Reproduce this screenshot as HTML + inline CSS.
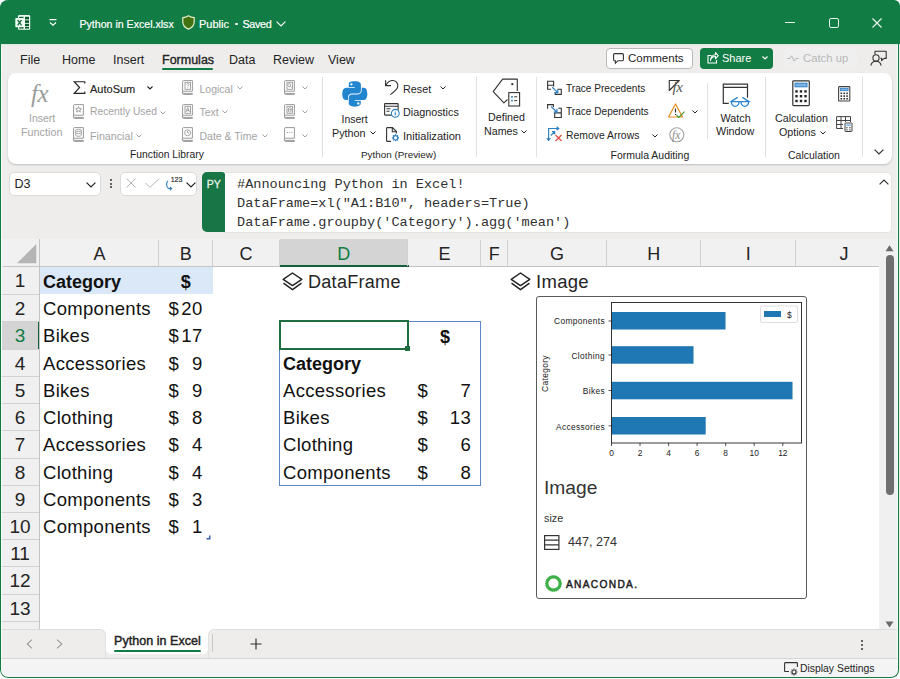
<!DOCTYPE html>
<html><head><meta charset="utf-8">
<style>
*{box-sizing:border-box;margin:0;padding:0}
html,body{width:900px;height:679px;overflow:hidden;background:#fff;font-family:"Liberation Sans",sans-serif;color:#242424}
.a{position:absolute}
svg{position:absolute;overflow:visible}
#win{position:absolute;left:0;top:0;width:900px;height:678px;border-radius:8px 6px 8px 8px;overflow:hidden;background:#eeedec}
#frame{position:absolute;left:0;top:0;width:899px;height:678px;border-radius:8px;border:1px solid #117c43;border-top:none;pointer-events:none}
#title{position:absolute;left:0;top:0;width:900px;height:44px;background:#117c43;color:#fff}
.tt{position:absolute;font-size:11px;color:#fff;white-space:nowrap;line-height:1;-webkit-text-stroke:0.2px #fff}
.tab{position:absolute;font-size:12.5px;color:#242424;line-height:1;white-space:nowrap}
#ribbon{position:absolute;left:8px;top:73px;width:884px;height:91px;background:#fff;border-radius:8px;box-shadow:0 1px 2px rgba(0,0,0,.2)}
.rl{position:absolute;font-size:10.5px;color:#242424;white-space:nowrap;line-height:1}
.dis{color:#a3a3a3}
.grp{position:absolute;top:77px;font-size:10.5px;color:#242424;white-space:nowrap;line-height:1}
.sep{position:absolute;top:4px;width:1px;height:80px;background:#e1e1e1}
.chev{position:absolute}
#grid{position:absolute;left:0;top:239px;width:881px;height:390px;background:#fff;overflow:hidden}
.ch{position:absolute;top:0;height:27px;border-right:1px solid #d9d9d9;border-bottom:1px solid #bdbdbd;background:#f3f3f3;font-size:17px;text-align:center;line-height:29px;color:#242424}
.rhx{position:absolute;left:0;width:39px;height:27.3px;border-bottom:1px solid #d9d9d9;border-right:1px solid #bdbdbd;background:#f3f3f3;font-size:19.5px;text-align:center;color:#242424;line-height:29px}
.c{position:absolute;font-size:18.5px;color:#111;white-space:nowrap;line-height:1;letter-spacing:0.3px}
.cb{letter-spacing:0}
.cb{font-weight:bold;font-size:18px}
</style></head><body>
<div id="win">
  <div id="title">
    <svg style="left:15px;top:15px" width="16" height="15" viewBox="0 0 16 15">
      <rect x="3" y="0" width="12.2" height="14.8" rx="1.2" fill="#e9fbef"/>
      <g fill="#0d5a2e"><rect x="10" y="1.8" width="4" height="2.6"/><rect x="10" y="5.3" width="4" height="2.6"/><rect x="10" y="8.8" width="4" height="2.4"/><rect x="10" y="12" width="4" height="1.6"/>
      <rect x="4.2" y="1.8" width="4.3" height="1.6"/><rect x="4.2" y="12" width="4.3" height="1.6"/></g>
      <rect x="0.3" y="3" width="8.5" height="9.3" rx="0.8" fill="#f2fff6"/>
      <path d="M2.6 5L6.5 10.3M6.5 5L2.6 10.3" stroke="#1b6b3e" stroke-width="1.3"/>
    </svg>
    <svg style="left:49px;top:19px" width="8" height="8" viewBox="0 0 8 8">
      <path d="M0.5 0.7H7.5M1 3.5L4 6.3L7 3.5" fill="none" stroke="#fff" stroke-width="1.2"/>
    </svg>
    <div class="tt" style="left:79.5px;top:19px;font-size:10.6px">Python in Excel.xlsx</div>
    <svg style="left:182px;top:15px" width="13" height="15" viewBox="0 0 13 15">
      <path d="M6.5 0.8C4.6 2 2.6 2.6 0.8 2.7V7C0.8 10.6 3.2 12.8 6.5 14.2C9.8 12.8 12.2 10.6 12.2 7V2.7C10.4 2.6 8.4 2 6.5 0.8Z" fill="#41720f" stroke="#dfeac4" stroke-width="1.25"/>
    </svg>
    <div class="tt" style="left:199px;top:19px;font-size:11px">Public</div>
    <div class="a" style="left:235px;top:22.8px;width:2.6px;height:2.6px;border-radius:50%;background:#fff"></div>
    <div class="tt" style="left:242.5px;top:19px;font-size:10.8px;letter-spacing:-0.35px">Saved</div>
    <svg style="left:275.5px;top:20.5px" width="10" height="6" viewBox="0 0 10 6">
      <path d="M0.6 0.6L5 5L9.4 0.6" fill="none" stroke="#fff" stroke-width="1.2"/>
    </svg>
    <div class="a" style="left:785px;top:21.5px;width:10px;height:1.2px;background:#e8f4ec"></div>
    <div class="a" style="left:828.5px;top:17.5px;width:10px;height:10px;border:1.2px solid #e8f4ec;border-radius:2px"></div>
    <svg style="left:872px;top:17.5px" width="10" height="10" viewBox="0 0 10 10">
      <path d="M0.5 0.5L9.5 9.5M9.5 0.5L0.5 9.5" stroke="#e8f4ec" stroke-width="1.2"/>
    </svg>
  </div>
  <!-- right buttons -->
  <div class="a" style="left:605.5px;top:47.5px;width:87px;height:21px;border:1px solid #b9b9b9;border-radius:4px;background:#fff"></div>
  <svg style="left:613px;top:53px" width="11" height="11" viewBox="0 0 11 11">
    <path d="M1.5 0.6H9.5A0.9 0.9 0 0 1 10.4 1.5V6.8A0.9 0.9 0 0 1 9.5 7.7H5L2.4 10.2V7.7H1.5A0.9 0.9 0 0 1 0.6 6.8V1.5A0.9 0.9 0 0 1 1.5 0.6Z" fill="none" stroke="#333" stroke-width="1.1"/>
  </svg>
  <div class="rl" style="left:628px;top:52.5px;font-size:11.5px;color:#242424">Comments</div>
  <div class="a" style="left:700px;top:47.5px;width:72.5px;height:21px;border-radius:4px;background:#117c43"></div>
  <svg style="left:707px;top:52px" width="12" height="12" viewBox="0 0 12 12">
    <path d="M4.5 3.5H1V11H9.5V8" fill="none" stroke="#fff" stroke-width="1.1"/>
    <path d="M3.5 8.5C4 5.5 6 4.5 8.5 4.5V6.8L11.2 3.6L8.5 0.6V2.8C5.5 2.8 3.5 5 3.5 8.5Z" fill="none" stroke="#fff" stroke-width="1.1" stroke-linejoin="round"/>
  </svg>
  <div class="rl" style="left:722px;top:53px;font-size:11px;color:#fff">Share</div>
  <svg style="left:762px;top:56px" width="6" height="4" viewBox="0 0 6 4">
    <path d="M0.5 0.5L3 3L5.5 0.5" fill="none" stroke="#fff" stroke-width="1.2"/>
  </svg>
  <div class="a" style="left:784px;top:48px;width:72.5px;height:20px;border-radius:4px;background:#efefef"></div>
  <svg style="left:787px;top:55px" width="12" height="7" viewBox="0 0 12 7">
    <path d="M0.3 3.5H2.8L4.6 0.8L7.2 6.2L8.9 3.5H11.6" fill="none" stroke="#b5b5b5" stroke-width="1"/>
  </svg>
  <div class="rl" style="left:803px;top:52.5px;font-size:11.3px;color:#b8b8b8">Catch up</div>
  <svg style="left:869px;top:49px" width="19" height="19" viewBox="869 49 19 19">
    <path d="M875 54.2V51.3H886.2V58.4H884.2L881.6 60.6L881.8 58.4H880.5" fill="none" stroke="#333" stroke-width="1.1" stroke-linejoin="round"/>
    <circle cx="876" cy="57.9" r="3.1" fill="#eeedec" stroke="#333" stroke-width="1.1"/>
    <path d="M870.9 65.6C871.3 62.8 873.4 61.3 876 61.3C878.6 61.3 880.7 62.8 881.1 65.6" fill="none" stroke="#333" stroke-width="1.1"/>
  </svg>
  <div class="a" style="left:0;top:44px;width:900px;height:1px;background:#d6ebdc"></div>
  <div class="tab" style="left:20px;top:54px">File</div>
  <div class="tab" style="left:62px;top:54px">Home</div>
  <div class="tab" style="left:113px;top:54px">Insert</div>
  <div class="tab" style="left:162px;top:54px;-webkit-text-stroke:0.35px #242424">Formulas</div>
  <div class="a" style="left:162px;top:68px;width:51px;height:2px;background:#117c43;border-radius:1px"></div>
  <div class="tab" style="left:229px;top:54px">Data</div>
  <div class="tab" style="left:273px;top:54px">Review</div>
  <div class="tab" style="left:328px;top:54px">View</div>

  <div id="ribbon"></div>
  <!-- ===== RIBBON CONTENT ===== -->
  <!-- Function Library -->
  <div class="a" style="left:31px;top:81px;font-family:'Liberation Serif',serif;font-style:italic;font-size:25px;color:#9c9c9c;line-height:1;letter-spacing:-0.5px">fx</div>
  <div class="rl dis" style="left:29px;top:113px">Insert</div>
  <div class="rl dis" style="left:21px;top:127px;font-size:10.8px">Function</div>
  <svg style="left:73px;top:81px" width="13" height="13" viewBox="0 0 13 13">
    <path d="M11.8 2.6V0.7H1.2L6.6 6.5L1.2 12.3H11.8V10.4" fill="none" stroke="#242424" stroke-width="1.15" stroke-linejoin="miter"/>
  </svg>
  <div class="rl" style="left:90px;top:83.5px;font-size:11px;-webkit-text-stroke:0.15px #242424">AutoSum</div>
  <svg class="chev" style="left:147px;top:86px" width="6" height="4" viewBox="0 0 6 4"><path d="M0.5 0.5L3 3L5.5 0.5" fill="none" stroke="#242424" stroke-width="1.1"/></svg>
  <div class="rl dis" style="left:90px;top:106.6px;font-size:10.3px">Recently Used</div>
  <svg class="chev" style="left:160px;top:111px" width="6" height="4" viewBox="0 0 6 4"><path d="M0.5 0.5L3 3L5.5 0.5" fill="none" stroke="#a3a3a3" stroke-width="1"/></svg>
  <div class="rl dis" style="left:90px;top:131.3px;font-size:10.7px">Financial</div>
  <svg class="chev" style="left:136px;top:134px" width="6" height="4" viewBox="0 0 6 4"><path d="M0.5 0.5L3 3L5.5 0.5" fill="none" stroke="#a3a3a3" stroke-width="1"/></svg>
  <!-- book icons col1 -->
  <svg style="left:73px;top:104px" width="12" height="15" viewBox="0 0 12 15">
    <path d="M1.5 0.6H10.4V11.2H1.5A1 1 0 0 0 1.5 13.4H10.4V14.4H1.5A0.9 0.9 0 0 1 0.6 13.5V1.5A0.9 0.9 0 0 1 1.5 0.6Z" fill="none" stroke="#9a9a9a" stroke-width="1"/>
    <path d="M5.5 2.6L6.3 4.6L8.4 4.7L6.8 6L7.3 8.1L5.5 7L3.7 8.1L4.2 6L2.6 4.7L4.7 4.6Z" fill="none" stroke="#9a9a9a" stroke-width="0.9"/>
  </svg>
  <svg style="left:73px;top:127px" width="12" height="15" viewBox="0 0 12 15">
    <path d="M1.5 0.6H10.4V11.2H1.5A1 1 0 0 0 1.5 13.4H10.4V14.4H1.5A0.9 0.9 0 0 1 0.6 13.5V1.5A0.9 0.9 0 0 1 1.5 0.6Z" fill="none" stroke="#9a9a9a" stroke-width="1"/>
    <ellipse cx="5.5" cy="3.4" rx="2.8" ry="1.1" fill="none" stroke="#9a9a9a" stroke-width="0.9"/>
    <path d="M2.7 3.4V8.3C2.7 9.6 8.3 9.6 8.3 8.3V3.4M2.7 5.8C2.7 7 8.3 7 8.3 5.8" fill="none" stroke="#9a9a9a" stroke-width="0.9"/>
  </svg>
  <!-- col2 -->
  <svg style="left:182px;top:80px" width="12" height="15" viewBox="0 0 12 15">
    <path d="M1.5 0.6H10.4V11.2H1.5A1 1 0 0 0 1.5 13.4H10.4V14.4H1.5A0.9 0.9 0 0 1 0.6 13.5V1.5A0.9 0.9 0 0 1 1.5 0.6Z" fill="none" stroke="#9a9a9a" stroke-width="1"/>
    <rect x="3" y="2.3" width="5.5" height="7" fill="none" stroke="#9a9a9a" stroke-width="0.9"/>
    <path d="M4.5 4.4C4.5 3.2 7 3.2 7 4.4C7 5.3 5.8 5.4 5.8 6.6M5.8 7.4V8.1" fill="none" stroke="#9a9a9a" stroke-width="0.9"/>
  </svg>
  <div class="rl dis" style="left:199.5px;top:83.5px;font-size:10.5px">Logical</div>
  <svg class="chev" style="left:237px;top:86px" width="6" height="4" viewBox="0 0 6 4"><path d="M0.5 0.5L3 3L5.5 0.5" fill="none" stroke="#a3a3a3" stroke-width="1"/></svg>
  <svg style="left:182px;top:104px" width="12" height="15" viewBox="0 0 12 15">
    <path d="M1.5 0.6H10.4V11.2H1.5A1 1 0 0 0 1.5 13.4H10.4V14.4H1.5A0.9 0.9 0 0 1 0.6 13.5V1.5A0.9 0.9 0 0 1 1.5 0.6Z" fill="none" stroke="#9a9a9a" stroke-width="1"/>
    <rect x="3" y="2.3" width="5.5" height="7" fill="none" stroke="#9a9a9a" stroke-width="0.9"/>
    <path d="M4 8L5.75 3.5L7.5 8M4.6 6.5H6.9" fill="none" stroke="#9a9a9a" stroke-width="0.9"/>
  </svg>
  <div class="rl dis" style="left:199.5px;top:106.6px;font-size:10.5px">Text</div>
  <svg class="chev" style="left:222px;top:110px" width="6" height="4" viewBox="0 0 6 4"><path d="M0.5 0.5L3 3L5.5 0.5" fill="none" stroke="#a3a3a3" stroke-width="1"/></svg>
  <svg style="left:182px;top:127px" width="12" height="15" viewBox="0 0 12 15">
    <path d="M1.5 0.6H10.4V11.2H1.5A1 1 0 0 0 1.5 13.4H10.4V14.4H1.5A0.9 0.9 0 0 1 0.6 13.5V1.5A0.9 0.9 0 0 1 1.5 0.6Z" fill="none" stroke="#9a9a9a" stroke-width="1"/>
    <circle cx="5.6" cy="5.8" r="3" fill="none" stroke="#9a9a9a" stroke-width="0.9"/>
    <path d="M5.6 4V5.9H7.2" fill="none" stroke="#9a9a9a" stroke-width="0.9"/>
  </svg>
  <div class="rl dis" style="left:199.5px;top:131.3px;font-size:10.5px">Date &amp; Time</div>
  <svg class="chev" style="left:262px;top:134px" width="6" height="4" viewBox="0 0 6 4"><path d="M0.5 0.5L3 3L5.5 0.5" fill="none" stroke="#a3a3a3" stroke-width="1"/></svg>
  <!-- col3 -->
  <svg style="left:284px;top:80px" width="12" height="15" viewBox="0 0 12 15">
    <path d="M1.5 0.6H10.4V11.2H1.5A1 1 0 0 0 1.5 13.4H10.4V14.4H1.5A0.9 0.9 0 0 1 0.6 13.5V1.5A0.9 0.9 0 0 1 1.5 0.6Z" fill="none" stroke="#9a9a9a" stroke-width="1"/>
    <rect x="3" y="2.3" width="5.5" height="7" fill="none" stroke="#9a9a9a" stroke-width="0.9"/>
    <circle cx="5.2" cy="5.2" r="1.5" fill="none" stroke="#9a9a9a" stroke-width="0.9"/>
    <path d="M6.3 6.3L7.6 7.6" stroke="#9a9a9a" stroke-width="0.9"/>
  </svg>
  <svg class="chev" style="left:302px;top:86px" width="6" height="4" viewBox="0 0 6 4"><path d="M0.5 0.5L3 3L5.5 0.5" fill="none" stroke="#a3a3a3" stroke-width="1"/></svg>
  <svg style="left:284px;top:104px" width="12" height="15" viewBox="0 0 12 15">
    <path d="M1.5 0.6H10.4V11.2H1.5A1 1 0 0 0 1.5 13.4H10.4V14.4H1.5A0.9 0.9 0 0 1 0.6 13.5V1.5A0.9 0.9 0 0 1 1.5 0.6Z" fill="none" stroke="#9a9a9a" stroke-width="1"/>
    <rect x="3" y="2.3" width="5.5" height="7" fill="none" stroke="#9a9a9a" stroke-width="0.9"/>
    <ellipse cx="5.75" cy="5.8" rx="1.5" ry="2.4" fill="none" stroke="#9a9a9a" stroke-width="0.9"/>
    <path d="M4.25 5.8H7.25" stroke="#9a9a9a" stroke-width="0.9"/>
  </svg>
  <svg class="chev" style="left:302px;top:110px" width="6" height="4" viewBox="0 0 6 4"><path d="M0.5 0.5L3 3L5.5 0.5" fill="none" stroke="#a3a3a3" stroke-width="1"/></svg>
  <svg style="left:284px;top:127px" width="12" height="15" viewBox="0 0 12 15">
    <path d="M1.5 0.6H10.4V11.2H1.5A1 1 0 0 0 1.5 13.4H10.4V14.4H1.5A0.9 0.9 0 0 1 0.6 13.5V1.5A0.9 0.9 0 0 1 1.5 0.6Z" fill="none" stroke="#9a9a9a" stroke-width="1"/>
    <path d="M3 5.5H4M5.2 5.5H6.2M7.4 5.5H8.4" stroke="#9a9a9a" stroke-width="1"/>
  </svg>
  <svg class="chev" style="left:302px;top:134px" width="6" height="4" viewBox="0 0 6 4"><path d="M0.5 0.5L3 3L5.5 0.5" fill="none" stroke="#a3a3a3" stroke-width="1"/></svg>
  <div class="grp" style="left:130px;top:150px;font-size:10.3px">Function Library</div>
  <div class="a" style="left:322px;top:77px;width:1px;height:80px;background:#e1e1e1"></div>

  <!-- Python group -->
  <svg style="left:342px;top:80.5px" width="25.5" height="25.5" viewBox="0 0 110 110">
    <path fill="#2286cf" d="M54.9 1.2C50.4 1.2 46.1 1.6 42.3 2.3C31.1 4.3 29.1 8.4 29.1 16V26H55.4V29.4H29.1H19.2C11.6 29.4 4.9 34 2.9 42.6C0.5 52.5 0.4 58.7 2.9 69C4.8 76.7 9.1 82.2 16.7 82.2H25.7V70.2C25.7 61.6 33.2 53.9 42.1 53.9H68.4C75.7 53.9 81.5 47.9 81.5 40.6V16C81.5 8.9 75.5 3.6 68.4 2.4C63.9 1.6 59.2 1.2 54.9 1.2ZM40.6 9.4C43.4 9.4 45.6 11.7 45.6 14.5C45.6 17.2 43.4 19.5 40.6 19.5C37.9 19.5 35.6 17.2 35.6 14.5C35.6 11.7 37.9 9.4 40.6 9.4Z"/>
    <path fill="#2286cf" d="M85 29.4V41.1C85 50.1 77.3 57.7 68.4 57.7H42.1C34.9 57.7 28.9 63.9 28.9 71.1V95.7C28.9 102.7 35 106.8 41.9 108.8C50.1 111.2 58 111.6 68.1 108.8C74.6 106.9 81.1 103.1 81.1 95.7V85.6H55V82.2H81.1H94.2C101.9 82.2 104.7 76.9 107.4 69C110.1 60.9 110 53.2 107.4 42.6C105.5 35 101.9 29.4 94.2 29.4ZM70.3 91.9C73 91.9 75.3 94.2 75.3 97C75.3 99.8 73 102.1 70.3 102.1C67.5 102.1 65.3 99.8 65.3 97C65.3 94.2 67.5 91.9 70.3 91.9Z"/>
  </svg>
  <div class="rl" style="left:341.5px;top:113.8px">Insert</div>
  <div class="rl" style="left:332px;top:127.6px;font-size:10.8px">Python</div>
  <svg class="chev" style="left:370px;top:131px" width="6" height="4" viewBox="0 0 6 4"><path d="M0.5 0.5L3 3L5.5 0.5" fill="none" stroke="#242424" stroke-width="1"/></svg>
  <svg style="left:384px;top:78px" width="16" height="18" viewBox="384 78 16 18">
    <path d="M385.6 80.2V85.6H391" fill="none" stroke="#333" stroke-width="1.1"/>
    <path d="M386 85.2C387.6 82 390.3 80.3 393.2 80.5C396.2 80.8 398.2 83.4 397.8 86.4C397.5 88.6 394.8 91.5 390.3 94.6" fill="none" stroke="#333" stroke-width="1.1"/>
  </svg>
  <div class="rl" style="left:403px;top:83.5px;font-size:10.8px">Reset</div>
  <svg class="chev" style="left:440px;top:86px" width="6" height="4" viewBox="0 0 6 4"><path d="M0.5 0.5L3 3L5.5 0.5" fill="none" stroke="#242424" stroke-width="1"/></svg>
  <svg style="left:384px;top:103px" width="16" height="15" viewBox="0 0 16 15">
    <rect x="0.6" y="0.6" width="13.5" height="11.5" rx="0.5" fill="none" stroke="#333" stroke-width="1.1"/>
    <path d="M0.6 3.2H14.1M2.5 5.8H6.5M2.5 8.3H5.5" stroke="#333" stroke-width="1.1"/>
    <circle cx="11.3" cy="10.3" r="3.9" fill="#fff" stroke="#2e7fc3" stroke-width="1.1"/>
    <path d="M11.3 9.2V12.3M11.3 7.8V8.3" stroke="#2e7fc3" stroke-width="1.2"/>
  </svg>
  <div class="rl" style="left:403px;top:106.6px;font-size:10.8px">Diagnostics</div>
  <svg style="left:386px;top:127px" width="14" height="15" viewBox="0 0 14 15">
    <path d="M5 14.4H1.2A0.6 0.6 0 0 1 0.6 13.8V1.2A0.6 0.6 0 0 1 1.2 0.6H6.5L10.4 4.5V6.5" fill="none" stroke="#333" stroke-width="1.1"/>
    <path d="M6.3 0.6V4.7H10.4" fill="none" stroke="#333" stroke-width="1.1"/>
    <circle cx="9.5" cy="10.8" r="2.2" fill="none" stroke="#2e7fc3" stroke-width="1.2"/>
    <path d="M9.5 7.3V8.4M9.5 13.2V14.3M6 10.8H7.1M11.9 10.8H13M7 8.3L7.8 9.1M11.2 12.5L12 13.3M12 8.3L11.2 9.1M7.8 12.5L7 13.3" stroke="#2e7fc3" stroke-width="1.2"/>
  </svg>
  <div class="rl" style="left:403px;top:131.3px;font-size:11.1px">Initialization</div>
  <div class="grp" style="left:361px;top:150px;font-size:9.9px">Python (Preview)</div>
  <div class="a" style="left:476px;top:77px;width:1px;height:80px;background:#e1e1e1"></div>

  <!-- Defined names -->
  <svg style="left:492px;top:78px" width="29" height="29" viewBox="0 0 29 29">
    <path d="M15.5 21.5L11.9 24.8L1.2 13.6L10.6 1.1H25.3V13" fill="none" stroke="#333" stroke-width="1.1" stroke-linejoin="round"/>
    <circle cx="20.3" cy="6.2" r="1.15" fill="#333"/>
    <rect x="16.8" y="14.6" width="10.8" height="13.4" fill="#fff" stroke="#333" stroke-width="1.1"/>
    <path d="M19.2 18.8H20.8M19.2 22.6H20.8" stroke="#2e7fc3" stroke-width="1.8"/>
    <path d="M22.2 18.8H25.2M22.2 22.6H25.2" stroke="#333" stroke-width="1"/>
  </svg>
  <div class="rl" style="left:488px;top:111.5px;font-size:10.7px">Defined</div>
  <div class="rl" style="left:484px;top:125.8px;font-size:10.7px">Names</div>
  <svg class="chev" style="left:521px;top:130px" width="6" height="4" viewBox="0 0 6 4"><path d="M0.5 0.5L3 3L5.5 0.5" fill="none" stroke="#242424" stroke-width="1"/></svg>
  <div class="a" style="left:536px;top:77px;width:1px;height:80px;background:#e1e1e1"></div>

  <!-- Formula Auditing -->
  <svg style="left:546px;top:79px" width="17" height="17" viewBox="546 79 17 17">
    <path d="M551 89.2H547.6V81.2H553.6V86.5M547.6 85.2H553.6" fill="none" stroke="#333" stroke-width="1.1"/>
    <path d="M557.5 89.2H561.3V94.4H555.2V92.6" fill="none" stroke="#333" stroke-width="1.1"/>
    <path d="M552.2 87.3L557.6 92.4M557.8 89.2V92.6H554.4" fill="none" stroke="#2e7fc3" stroke-width="1.2"/>
  </svg>
  <div class="rl" style="left:566px;top:83.5px;font-size:10.1px">Trace Precedents</div>
  <svg style="left:546px;top:103px" width="17" height="17" viewBox="546 103 17 17">
    <path d="M547.6 108.8V104.6H553.4V107" fill="none" stroke="#333" stroke-width="1.1"/>
    <path d="M558.3 108.3H561.3V117.5H554.7V112.8M554.7 112.9H561.3" fill="none" stroke="#333" stroke-width="1.1"/>
    <path d="M551.2 106.5L556.8 112M557 108.8V112.2H553.6" fill="none" stroke="#2e7fc3" stroke-width="1.2"/>
  </svg>
  <div class="rl" style="left:566px;top:106.6px;font-size:10.1px">Trace Dependents</div>
  <svg style="left:545px;top:126px" width="18" height="17" viewBox="545 126 18 17">
    <path d="M548.6 140V128.5H558.5M546.8 138.2L548.6 140.3L550.4 138.2M556.6 126.8L558.8 128.5L556.6 130.3M550.8 135.5L554.5 131.8M552 131.6H554.7V134.3" fill="none" stroke="#2e7fc3" stroke-width="1.15"/>
    <path d="M555.5 135L561.5 141M561.5 135L555.5 141" stroke="#e04848" stroke-width="1.2"/>
  </svg>
  <div class="rl" style="left:566px;top:131.3px;font-size:10.4px">Remove Arrows</div>
  <svg class="chev" style="left:652px;top:134px" width="6" height="4" viewBox="0 0 6 4"><path d="M0.5 0.5L3 3L5.5 0.5" fill="none" stroke="#242424" stroke-width="1"/></svg>
  <svg style="left:668px;top:79px" width="17" height="17" viewBox="0 0 17 17">
    <path d="M1.3 1.5V11.5L11.3 1.5Z" fill="none" stroke="#333" stroke-width="1.1" stroke-linejoin="round"/>
  </svg>
  <div class="a" style="left:672.5px;top:80px;font-family:'Liberation Serif',serif;font-style:italic;font-size:15px;color:#555;line-height:1;letter-spacing:-0.3px">fx</div>
  <svg style="left:668px;top:103px" width="18" height="16" viewBox="0 0 18 16">
    <path d="M7.5 1L14.5 14H0.6Z" fill="none" stroke="#e8891a" stroke-width="1.2" stroke-linejoin="round"/>
    <path d="M7.5 5.5V9.5M7.5 11V12" stroke="#333" stroke-width="1.2"/>
    <path d="M8.5 12L10.8 14.3L16.5 8.6" fill="none" stroke="#3a9a3a" stroke-width="1.2"/>
  </svg>
  <svg class="chev" style="left:692px;top:110px" width="6" height="4" viewBox="0 0 6 4"><path d="M0.5 0.5L3 3L5.5 0.5" fill="none" stroke="#242424" stroke-width="1"/></svg>
  <svg style="left:669px;top:127px" width="16" height="16" viewBox="0 0 16 16">
    <circle cx="7.8" cy="7.8" r="7" fill="none" stroke="#a3a3a3" stroke-width="1.1"/>
  </svg>
  <div class="a" style="left:672px;top:129.5px;font-family:'Liberation Serif',serif;font-style:italic;font-size:11.5px;color:#8e8e8e;line-height:1">fx</div>
  <div class="grp" style="left:610.5px;top:150px;font-size:10.5px">Formula Auditing</div>
  <div class="a" style="left:707px;top:83px;width:1px;height:56px;background:#e1e1e1"></div>

  <!-- Watch window -->
  <svg style="left:720px;top:82px" width="32" height="28" viewBox="720 82 32 28">
    <path d="M728.8 103.3H723.3V84.1H747.5V97.7M723.3 87.4H747.5" fill="none" stroke="#333" stroke-width="1.2"/>
    <path d="M730.6 101.7H749.6M731.4 101.8C731.2 107.8 739.2 107.8 739 101.8M741 101.8C740.8 107.8 748.8 107.8 748.6 101.8M731.3 101.4L737.2 97.6M748.7 101.4L742.8 97.6" fill="none" stroke="#2e86cf" stroke-width="1.3" stroke-linecap="round"/>
  </svg>
  <div class="rl" style="left:720.5px;top:113px;font-size:10.8px">Watch</div>
  <div class="rl" style="left:716px;top:126.3px;font-size:10.8px">Window</div>
  <div class="a" style="left:765px;top:77px;width:1px;height:80px;background:#e1e1e1"></div>

  <!-- Calculation -->
  <svg style="left:792px;top:80px" width="19" height="27" viewBox="0 0 19 27">
    <rect x="0.8" y="0.8" width="16.5" height="24.8" rx="0.8" fill="#fff" stroke="#333" stroke-width="1.2"/>
    <rect x="3" y="3.2" width="12" height="3.6" fill="#7db3e8" stroke="#2e7fc3" stroke-width="1"/>
    <g fill="#222"><rect x="3.3" y="10.2" width="2.4" height="2.4"/><rect x="7.8" y="10.2" width="2.4" height="2.4"/><rect x="12.3" y="10.2" width="2.4" height="2.4"/>
    <rect x="3.3" y="15" width="2.4" height="2.4"/><rect x="7.8" y="15" width="2.4" height="2.4"/><rect x="12.3" y="15" width="2.4" height="2.4"/>
    <rect x="3.3" y="19.8" width="2.4" height="2.4"/><rect x="7.8" y="19.8" width="2.4" height="2.4"/><rect x="12.3" y="19.8" width="2.4" height="2.4"/></g>
  </svg>
  <div class="rl" style="left:775px;top:112.9px;font-size:10.7px">Calculation</div>
  <div class="rl" style="left:779px;top:126.9px;font-size:10.7px">Options</div>
  <svg class="chev" style="left:820px;top:131px" width="6" height="4" viewBox="0 0 6 4"><path d="M0.5 0.5L3 3L5.5 0.5" fill="none" stroke="#242424" stroke-width="1"/></svg>
  <svg style="left:838px;top:86px" width="13" height="16" viewBox="0 0 13 16">
    <rect x="0.6" y="0.6" width="11.2" height="14.4" rx="0.6" fill="#fff" stroke="#444" stroke-width="1.1"/>
    <rect x="2.3" y="2.3" width="7.8" height="2.4" fill="#7db3e8" stroke="#2e7fc3" stroke-width="0.8"/>
    <g fill="#333"><rect x="2.5" y="6.5" width="1.6" height="1.6"/><rect x="5.4" y="6.5" width="1.6" height="1.6"/><rect x="8.3" y="6.5" width="1.6" height="1.6"/>
    <rect x="2.5" y="9.3" width="1.6" height="1.6"/><rect x="5.4" y="9.3" width="1.6" height="1.6"/><rect x="8.3" y="9.3" width="1.6" height="1.6"/>
    <rect x="2.5" y="12" width="1.6" height="1.6"/><rect x="5.4" y="12" width="1.6" height="1.6"/><rect x="8.3" y="12" width="1.6" height="1.6"/></g>
  </svg>
  <svg style="left:836px;top:116px" width="17" height="16" viewBox="0 0 17 16">
    <path d="M0.6 0.6H14.5V6M0.6 0.6V12.5H7M0.6 4.5H14.5M0.6 8.5H7M5 0.6V12.5M9.5 0.6V6" fill="none" stroke="#444" stroke-width="1"/>
    <rect x="9" y="7" width="7" height="8.5" rx="0.5" fill="#fff" stroke="#444" stroke-width="1"/>
    <rect x="10.3" y="8.4" width="4.4" height="1.6" fill="#7db3e8"/>
    <g fill="#555"><rect x="10.3" y="11" width="1.3" height="1.3"/><rect x="13.3" y="11" width="1.3" height="1.3"/><rect x="10.3" y="13.2" width="1.3" height="1.3"/><rect x="13.3" y="13.2" width="1.3" height="1.3"/></g>
  </svg>
  <div class="grp" style="left:788px;top:150px;font-size:10.5px">Calculation</div>
  <div class="a" style="left:862px;top:77px;width:1px;height:80px;background:#e1e1e1"></div>
  <svg style="left:874px;top:148.5px" width="10" height="6" viewBox="0 0 10 6"><path d="M0.6 0.6L5 5L9.4 0.6" fill="none" stroke="#333" stroke-width="1.2"/></svg>

  <div id="grid"></div>
  <!-- ===== GRID ===== -->
  <div class="a" style="left:1px;top:239px;width:878px;height:390px;background:#fff"></div>
  <div class="a" style="left:1px;top:239px;width:878px;height:27px;background:#f1f1f1"></div>
  <div class="a" style="left:1px;top:266px;width:39px;height:363px;background:#f0f0f0"></div>
  <svg style="left:16px;top:243px" width="21" height="21" viewBox="0 0 21 21"><path d="M20.3 1V20.3H1Z" fill="#b5b5b5"/></svg>
  <div class="a" style="left:280px;top:239px;width:128px;height:27px;background:#d4d4d4"></div>
  <div class="a" style="left:279.5px;top:265px;width:129px;height:2px;background:#14603a"></div>
  <div class="a" style="left:1px;top:321px;width:39px;height:28px;background:#d4d4d4"></div>
  <div class="a" style="left:38px;top:321px;width:2px;height:28px;background:#14603a"></div>
  <div class="a" style="left:3px;top:265.5px;width:876px;height:1px;background:#c4c4c4"></div>
  <div class="a" style="left:279.5px;top:265px;width:129px;height:2px;background:#14603a"></div>
  <div class="a" style="left:39px;top:239px;width:1px;height:390px;background:#c4c4c4"></div>
  <div class="a" style="left:158px;top:240px;width:1px;height:26px;background:#d0d0d0"></div>
  <div class="a" style="left:212px;top:240px;width:1px;height:26px;background:#d0d0d0"></div>
  <div class="a" style="left:279px;top:240px;width:1px;height:26px;background:#d0d0d0"></div>
  <div class="a" style="left:407px;top:240px;width:1px;height:26px;background:#d0d0d0"></div>
  <div class="a" style="left:480px;top:240px;width:1px;height:26px;background:#d0d0d0"></div>
  <div class="a" style="left:507px;top:240px;width:1px;height:26px;background:#d0d0d0"></div>
  <div class="a" style="left:606px;top:240px;width:1px;height:26px;background:#d0d0d0"></div>
  <div class="a" style="left:700px;top:240px;width:1px;height:26px;background:#d0d0d0"></div>
  <div class="a" style="left:795px;top:240px;width:1px;height:26px;background:#d0d0d0"></div>
  <div class="a" style="left:40px;top:245px;width:119px;text-align:center;font-size:18px;line-height:1;color:#242424">A</div>
  <div class="a" style="left:159px;top:245px;width:53.5px;text-align:center;font-size:18px;line-height:1;color:#242424">B</div>
  <div class="a" style="left:212.5px;top:245px;width:67.0px;text-align:center;font-size:18px;line-height:1;color:#242424">C</div>
  <div class="a" style="left:279.5px;top:245px;width:128.5px;text-align:center;font-size:18px;line-height:1;color:#117c43">D</div>
  <div class="a" style="left:408px;top:245px;width:73px;text-align:center;font-size:18px;line-height:1;color:#242424">E</div>
  <div class="a" style="left:481px;top:245px;width:26.5px;text-align:center;font-size:18px;line-height:1;color:#242424">F</div>
  <div class="a" style="left:507.5px;top:245px;width:99.0px;text-align:center;font-size:18px;line-height:1;color:#242424">G</div>
  <div class="a" style="left:606.5px;top:245px;width:94.5px;text-align:center;font-size:18px;line-height:1;color:#242424">H</div>
  <div class="a" style="left:701px;top:245px;width:94.5px;text-align:center;font-size:18px;line-height:1;color:#242424">I</div>
  <div class="a" style="left:795.5px;top:245px;width:97px;text-align:center;font-size:18px;line-height:1;color:#242424">J</div>
  <div class="a" style="left:1px;top:293.5px;width:38px;height:1px;background:#d2d2d2"></div>
  <div class="a" style="left:1px;top:270.5px;width:38px;text-align:center;font-size:19px;line-height:1;color:#242424">1</div>
  <div class="a" style="left:1px;top:320.5px;width:38px;height:1px;background:#d2d2d2"></div>
  <div class="a" style="left:1px;top:298.5px;width:38px;text-align:center;font-size:19px;line-height:1;color:#242424">2</div>
  <div class="a" style="left:1px;top:348.5px;width:38px;height:1px;background:#d2d2d2"></div>
  <div class="a" style="left:1px;top:325.5px;width:38px;text-align:center;font-size:19px;line-height:1;color:#117c43">3</div>
  <div class="a" style="left:1px;top:375.5px;width:38px;height:1px;background:#d2d2d2"></div>
  <div class="a" style="left:1px;top:353.5px;width:38px;text-align:center;font-size:19px;line-height:1;color:#242424">4</div>
  <div class="a" style="left:1px;top:402.5px;width:38px;height:1px;background:#d2d2d2"></div>
  <div class="a" style="left:1px;top:380.5px;width:38px;text-align:center;font-size:19px;line-height:1;color:#242424">5</div>
  <div class="a" style="left:1px;top:429.5px;width:38px;height:1px;background:#d2d2d2"></div>
  <div class="a" style="left:1px;top:407.5px;width:38px;text-align:center;font-size:19px;line-height:1;color:#242424">6</div>
  <div class="a" style="left:1px;top:457.5px;width:38px;height:1px;background:#d2d2d2"></div>
  <div class="a" style="left:1px;top:434.5px;width:38px;text-align:center;font-size:19px;line-height:1;color:#242424">7</div>
  <div class="a" style="left:1px;top:484.5px;width:38px;height:1px;background:#d2d2d2"></div>
  <div class="a" style="left:1px;top:462.5px;width:38px;text-align:center;font-size:19px;line-height:1;color:#242424">8</div>
  <div class="a" style="left:1px;top:512.0px;width:38px;height:1px;background:#d2d2d2"></div>
  <div class="a" style="left:1px;top:489.5px;width:38px;text-align:center;font-size:19px;line-height:1;color:#242424">9</div>
  <div class="a" style="left:1px;top:539.0px;width:38px;height:1px;background:#d2d2d2"></div>
  <div class="a" style="left:1px;top:517.0px;width:38px;text-align:center;font-size:19px;line-height:1;color:#242424">10</div>
  <div class="a" style="left:1px;top:566.0px;width:38px;height:1px;background:#d2d2d2"></div>
  <div class="a" style="left:1px;top:544.0px;width:38px;text-align:center;font-size:19px;line-height:1;color:#242424">11</div>
  <div class="a" style="left:1px;top:593.5px;width:38px;height:1px;background:#d2d2d2"></div>
  <div class="a" style="left:1px;top:571.0px;width:38px;text-align:center;font-size:19px;line-height:1;color:#242424">12</div>
  <div class="a" style="left:1px;top:620.5px;width:38px;height:1px;background:#d2d2d2"></div>
  <div class="a" style="left:1px;top:598.5px;width:38px;text-align:center;font-size:19px;line-height:1;color:#242424">13</div>
  <div class="a" style="left:1px;top:647.5px;width:38px;height:1px;background:#d2d2d2"></div>
  <!-- cells -->
  <div class="a" style="left:40px;top:267px;width:172.5px;height:27px;background:#dae8f7"></div>
  <div class="c cb" style="left:43px;top:272.5px">Category</div>
  <div class="c cb" style="left:159px;width:53.5px;text-align:center;top:272.5px">$</div>
  <div class="c" style="left:43px;top:299.5px">Components</div>
  <div class="c" style="left:168.5px;top:299.5px">$</div>
  <div class="c" style="left:150px;width:52.5px;text-align:right;top:299.5px">20</div>
  <div class="c" style="left:43px;top:326.5px">Bikes</div>
  <div class="c" style="left:168.5px;top:326.5px">$</div>
  <div class="c" style="left:150px;width:52.5px;text-align:right;top:326.5px">17</div>
  <div class="c" style="left:43px;top:354.5px">Accessories</div>
  <div class="c" style="left:168.5px;top:354.5px">$</div>
  <div class="c" style="left:150px;width:52.5px;text-align:right;top:354.5px">9</div>
  <div class="c" style="left:43px;top:381.5px">Bikes</div>
  <div class="c" style="left:168.5px;top:381.5px">$</div>
  <div class="c" style="left:150px;width:52.5px;text-align:right;top:381.5px">9</div>
  <div class="c" style="left:43px;top:408.5px">Clothing</div>
  <div class="c" style="left:168.5px;top:408.5px">$</div>
  <div class="c" style="left:150px;width:52.5px;text-align:right;top:408.5px">8</div>
  <div class="c" style="left:43px;top:435.5px">Accessories</div>
  <div class="c" style="left:168.5px;top:435.5px">$</div>
  <div class="c" style="left:150px;width:52.5px;text-align:right;top:435.5px">4</div>
  <div class="c" style="left:43px;top:463.5px">Clothing</div>
  <div class="c" style="left:168.5px;top:463.5px">$</div>
  <div class="c" style="left:150px;width:52.5px;text-align:right;top:463.5px">4</div>
  <div class="c" style="left:43px;top:490.5px">Components</div>
  <div class="c" style="left:168.5px;top:490.5px">$</div>
  <div class="c" style="left:150px;width:52.5px;text-align:right;top:490.5px">3</div>
  <div class="c" style="left:43px;top:518.0px">Components</div>
  <div class="c" style="left:168.5px;top:518.0px">$</div>
  <div class="c" style="left:150px;width:52.5px;text-align:right;top:518.0px">1</div>
  <svg style="left:206px;top:534.5px" width="5" height="5" viewBox="0 0 5 5"><path d="M4.5 0.5V4.5H0.5V3H3V0.5Z" fill="#3c5fb0"/></svg>
  <svg style="left:282px;top:272px" width="21" height="20" viewBox="0 0 21 20"><path d="M10.5 1L19.8 7.3L10.5 13.6L1.2 7.3Z" fill="none" stroke="#242424" stroke-width="1.5" stroke-linejoin="round"/><path d="M1.5 11.2L10.5 17.7L19.5 11.2" fill="none" stroke="#242424" stroke-width="1.5" stroke-linejoin="round"/></svg>
  <div class="c" style="left:308px;top:272.5px;font-size:18px;color:#242424">DataFrame</div>
  <div class="a" style="left:279px;top:320.5px;width:202px;height:165px;border:1px solid #5d86c5"></div>
  <div class="a" style="left:278.5px;top:320px;width:130.5px;height:30px;border:2px solid #1e6e42"></div>
  <div class="a" style="left:405px;top:346px;width:5px;height:5px;background:#1e6e42"></div>
  <div class="c cb" style="left:440px;top:327.5px">$</div>
  <div class="c cb" style="left:283px;top:354.5px">Category</div>
  <div class="c" style="left:283px;top:381.5px">Accessories</div>
  <div class="c" style="left:417.5px;top:381.5px">$</div>
  <div class="c" style="left:420px;width:51px;text-align:right;top:381.5px">7</div>
  <div class="c" style="left:283px;top:408.5px">Bikes</div>
  <div class="c" style="left:417.5px;top:408.5px">$</div>
  <div class="c" style="left:420px;width:51px;text-align:right;top:408.5px">13</div>
  <div class="c" style="left:283px;top:435.5px">Clothing</div>
  <div class="c" style="left:417.5px;top:435.5px">$</div>
  <div class="c" style="left:420px;width:51px;text-align:right;top:435.5px">6</div>
  <div class="c" style="left:283px;top:463.5px">Components</div>
  <div class="c" style="left:417.5px;top:463.5px">$</div>
  <div class="c" style="left:420px;width:51px;text-align:right;top:463.5px">8</div>
  <svg style="left:510px;top:272px" width="21" height="20" viewBox="0 0 21 20"><path d="M10.5 1L19.8 7.3L10.5 13.6L1.2 7.3Z" fill="none" stroke="#242424" stroke-width="1.5" stroke-linejoin="round"/><path d="M1.5 11.2L10.5 17.7L19.5 11.2" fill="none" stroke="#242424" stroke-width="1.5" stroke-linejoin="round"/></svg>
  <div class="c" style="left:536px;top:272.5px;font-size:18.5px;color:#242424">Image</div>
  <!-- ===== IMAGE CARD ===== -->
  <div class="a" style="left:535.5px;top:296px;width:271px;height:303px;border:1.2px solid #5a5a5a;border-radius:3px;background:#fff"></div>
  <svg style="left:536px;top:297px" width="270" height="170" viewBox="536 297 270 170">
    <g fill="#1f77b4">
      <rect x="611.5" y="312" width="114" height="17.5"/>
      <rect x="611.5" y="346.2" width="82" height="17.5"/>
      <rect x="611.5" y="381.8" width="181" height="17.5"/>
      <rect x="611.5" y="417" width="94.2" height="17.5"/>
    </g>
    <rect x="611.5" y="302.5" width="190" height="140.5" fill="none" stroke="#222" stroke-width="0.9"/>
    <g stroke="#222" stroke-width="0.8">
      <path d="M608.5 321H611.5M608.5 355H611.5M608.5 390.5H611.5M608.5 425.8H611.5"/>
      <path d="M611.5 443V446M640 443V446M668.6 443V446M697.1 443V446M725.7 443V446M754.2 443V446M782.8 443V446"/>
    </g>
    <g font-family="Liberation Sans" font-size="8.4" letter-spacing="0.35" fill="#222" text-anchor="end">
      <text x="605" y="323.8">Components</text>
      <text x="605" y="359">Clothing</text>
      <text x="605" y="394.3">Bikes</text>
      <text x="605" y="429.6">Accessories</text>
    </g>
    <g font-family="Liberation Sans" font-size="8.4" fill="#222" text-anchor="middle">
      <text x="611.5" y="455.5">0</text><text x="640" y="455.5">2</text><text x="668.6" y="455.5">4</text><text x="697.1" y="455.5">6</text><text x="725.7" y="455.5">8</text><text x="754.2" y="455.5">10</text><text x="782.8" y="455.5">12</text>
    </g>
    <text x="547.8" y="373.5" font-family="Liberation Sans" font-size="8.4" letter-spacing="0.35" fill="#222" text-anchor="middle" transform="rotate(-90 547.8 373.5)">Category</text>
    <rect x="760.5" y="306" width="37" height="16.5" rx="1.5" fill="#fff" stroke="#d6d6d6" stroke-width="0.8"/>
    <rect x="764" y="311" width="17" height="6" fill="#1f77b4"/>
    <text x="787" y="318" font-family="Liberation Sans" font-size="8.4" fill="#222">$</text>
  </svg>
  <div class="a" style="left:544px;top:478px;font-size:19.2px;line-height:1;color:#333">Image</div>
  <div class="a" style="left:544px;top:512.5px;font-size:10.8px;line-height:1;color:#333">size</div>
  <svg style="left:544px;top:535px" width="16" height="15" viewBox="0 0 16 15">
    <rect x="0.6" y="0.6" width="14.3" height="13.8" fill="none" stroke="#333" stroke-width="1.2"/>
    <path d="M0.6 5.2H14.9M0.6 9.8H14.9" stroke="#333" stroke-width="1.2"/>
  </svg>
  <div class="a" style="left:568px;top:536px;font-size:12.6px;line-height:1;color:#333">447, 274</div>
  <svg style="left:545px;top:575px" width="17" height="17" viewBox="0 0 17 17">
    <circle cx="8.5" cy="8.5" r="6.6" fill="none" stroke="#3eb049" stroke-width="3"/>
    <circle cx="8.5" cy="8.5" r="8" fill="none" stroke="#3eb049" stroke-width="0.9" stroke-dasharray="1.2 1"/>
  </svg>
  <div class="a" style="left:566px;top:579.5px;font-size:10.2px;line-height:1;color:#1e1e1e;-webkit-text-stroke:0.45px #1e1e1e;letter-spacing:1.3px">ANACONDA.</div>

  <!-- ===== SCROLLBAR ===== -->
  <div class="a" style="left:879px;top:239px;width:19px;height:390px;background:#f0f0f0"></div>
  <svg style="left:885px;top:244.5px" width="9" height="7" viewBox="0 0 9 7"><path d="M4.5 0.3L8.5 6.3H0.5Z" fill="#6a6a6a"/></svg>
  <div class="a" style="left:885.5px;top:255px;width:8.3px;height:239.5px;background:#6f6f6f;border-radius:4.2px"></div>
  <svg style="left:885px;top:620.5px" width="9" height="7" viewBox="0 0 9 7"><path d="M0.5 0.5H8.5L4.5 6.5Z" fill="#6a6a6a"/></svg>

  <!-- ===== SHEET TABS ===== -->
  <div class="a" style="left:1px;top:629px;width:897px;height:28.5px;background:#eeedec"></div>
  <div class="a" style="left:100px;top:629px;width:114px;height:10px;background:#fff"></div>
  <div class="a" style="left:1px;top:629px;width:105px;height:28.5px;background:#eeedec;border-radius:0 6px 0 0;border-top:1px solid #dddddd;border-right:1px solid #e2e2e2"></div>
  <div class="a" style="left:208px;top:629px;width:690px;height:28.5px;background:#eeedec;border-radius:6px 0 0 0;border-top:1px solid #dddddd;border-left:1px solid #e2e2e2"></div>
  <div class="a" style="left:106px;top:629px;width:102px;height:25px;background:#fff;border-radius:0 0 5px 5px"></div>
  <svg style="left:26px;top:638.5px" width="7" height="10" viewBox="0 0 7 10"><path d="M6 0.6L1.2 5L6 9.4" fill="none" stroke="#9a9a9a" stroke-width="1.1"/></svg>
  <svg style="left:56px;top:638.5px" width="7" height="10" viewBox="0 0 7 10"><path d="M1 0.6L5.8 5L1 9.4" fill="none" stroke="#9a9a9a" stroke-width="1.1"/></svg>
  <div class="a" style="left:114px;top:634.5px;font-size:12.5px;line-height:1;color:#242424;-webkit-text-stroke:0.45px #242424;letter-spacing:0.05px">Python in Excel</div>
  <div class="a" style="left:114px;top:650px;width:87px;height:2.2px;background:#117c43;border-radius:1px"></div>
  <div class="a" style="left:211.5px;top:634px;width:1px;height:18px;background:#c8c8c8"></div>
  <svg style="left:250px;top:637.5px" width="12" height="12" viewBox="0 0 12 12"><path d="M6 0.5V11.5M0.5 6H11.5" stroke="#333" stroke-width="1.2"/></svg>
  <div class="a" style="left:861px;top:640px;width:2px;height:2px;background:#333;border-radius:1px"></div>
  <div class="a" style="left:861px;top:644px;width:2px;height:2px;background:#333;border-radius:1px"></div>
  <div class="a" style="left:861px;top:648px;width:2px;height:2px;background:#333;border-radius:1px"></div>

  <!-- ===== STATUS BAR ===== -->
  <div class="a" style="left:1px;top:657.5px;width:897px;height:1px;background:#d6d6d6"></div>
  <div class="a" style="left:1px;top:658.5px;width:897px;height:20px;background:#f4f4f4"></div>
  <svg style="left:784px;top:662px" width="15" height="14" viewBox="0 0 15 14">
    <path d="M5 9.5H1.2A0.6 0.6 0 0 1 0.6 8.9V1.2A0.6 0.6 0 0 1 1.2 0.6H12.8A0.6 0.6 0 0 1 13.4 1.2V5" fill="none" stroke="#333" stroke-width="1.1"/>
    <circle cx="10" cy="10" r="2" fill="none" stroke="#333" stroke-width="1.1"/>
    <path d="M10 6.6V7.5M10 12.5V13.4M6.6 10H7.5M12.5 10H13.4M7.6 7.6L8.2 8.2M11.8 11.8L12.4 12.4M12.4 7.6L11.8 8.2M8.2 11.8L7.6 12.4" stroke="#333" stroke-width="1.1"/>
  </svg>
  <div class="a" style="left:800px;top:664px;font-size:10.4px;line-height:1;color:#242424">Display Settings</div>
  <!-- ===== FORMULA BAR ===== -->
  <div class="a" style="left:8.5px;top:171.5px;width:92px;height:24px;background:#fff;border:1px solid #dadada;border-radius:5px"></div>
  <div class="rl" style="left:14.5px;top:178px;font-size:12.6px;color:#242424">D3</div>
  <svg style="left:86px;top:181.5px" width="10" height="6" viewBox="0 0 10 6"><path d="M0.6 0.6L5 5L9.4 0.6" fill="none" stroke="#242424" stroke-width="1.2"/></svg>
  <div class="a" style="left:109.5px;top:179px;width:2px;height:2px;background:#333;border-radius:1px"></div>
  <div class="a" style="left:109.5px;top:182.5px;width:2px;height:2px;background:#333;border-radius:1px"></div>
  <div class="a" style="left:109.5px;top:186px;width:2px;height:2px;background:#333;border-radius:1px"></div>
  <div class="a" style="left:119.5px;top:171.5px;width:77px;height:24px;background:#fff;border:1px solid #dadada;border-radius:5px"></div>
  <svg style="left:125.5px;top:178px" width="10" height="10" viewBox="0 0 10 10"><path d="M0.5 0.5L9.5 9.5M9.5 0.5L0.5 9.5" stroke="#b5b5b5" stroke-width="1"/></svg>
  <svg style="left:145px;top:178px" width="15" height="10" viewBox="0 0 15 10"><path d="M0.6 5L4.8 9.3L14.4 0.6" fill="none" stroke="#b5b5b5" stroke-width="1"/></svg>
  <svg style="left:165px;top:180px" width="8" height="12" viewBox="0 0 8 12"><path d="M3 0.8C1 2.5 1 6.5 3.5 8.5H6.5M4.8 6.8L6.7 8.5L4.8 10.3" fill="none" stroke="#2e7fc3" stroke-width="1.1"/></svg>
  <div class="a" style="left:170.7px;top:176px;font-size:7px;color:#333;line-height:1;-webkit-text-stroke:0.2px #333">123</div>
  <svg style="left:186px;top:181.5px" width="10" height="6" viewBox="0 0 10 6"><path d="M0.6 0.6L5 5L9.4 0.6" fill="none" stroke="#242424" stroke-width="1.2"/></svg>
  <div class="a" style="left:201.8px;top:171.8px;width:22.8px;height:60.5px;background:#187545;border-radius:5px 3px 0 5px"></div>
  <div class="a" style="left:224.5px;top:171.5px;width:667px;height:61.5px;background:#fff;border-radius:0 5px 5px 0;border:1px solid #e3e3e3;border-left:none"></div>
  <div class="rl" style="left:206.8px;top:178.5px;font-size:10.5px;color:#e4f4e8;-webkit-text-stroke:0.3px #e4f4e8">PY</div>
  <div class="a" style="left:237px;top:174.5px;font-family:'Liberation Mono',monospace;font-size:13.55px;line-height:19px;color:#303030;white-space:pre">#Announcing Python in Excel!
DataFrame=xl("A1:B10", headers=True)
DataFrame.groupby('Category').agg('mean')</div>
  <svg style="left:878.5px;top:179px" width="10" height="6" viewBox="0 0 10 6"><path d="M0.6 5.4L5 1L9.4 5.4" fill="none" stroke="#333" stroke-width="1.2"/></svg>
  <div class="a" style="left:1px;top:45px;width:1px;height:628px;background:#f6fbf8"></div>
  <div class="a" style="left:897px;top:45px;width:1px;height:628px;background:#f6fbf8"></div>
  <div id="frame"></div>
</div>
</body></html>
